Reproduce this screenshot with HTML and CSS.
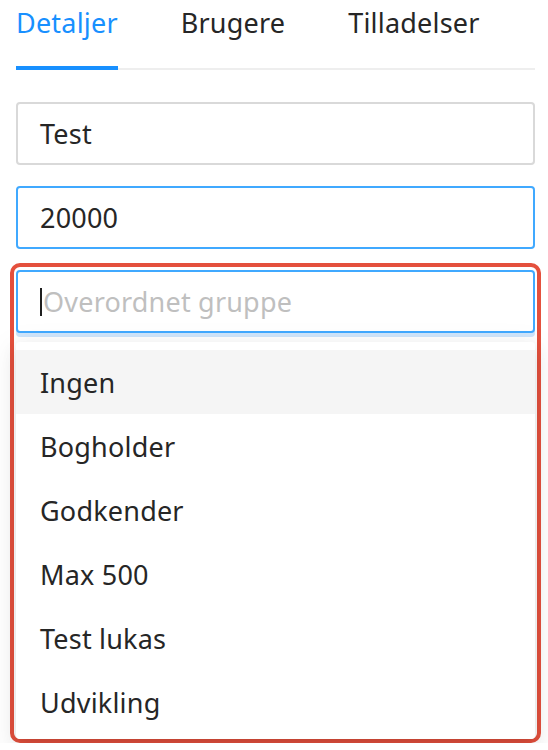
FILE: index.html
```html
<!DOCTYPE html>
<html lang="da">
<head>
<meta charset="utf-8">
<title>Gruppe</title>
<link rel="stylesheet" href="styles.css">
</head>
<body>
<div class="page">
  <nav class="tabs">
    <div class="tab active">Detaljer</div>
    <div class="tab">Brugere</div>
    <div class="tab">Tilladelser</div>
  </nav>
  <div class="form">
    <div class="field">Test</div>
    <div class="field focus">20000</div>
    <div class="highlight">
      <div class="field focus select"><span class="caret"></span><span class="placeholder">Overordnet gruppe</span></div>
      <ul class="menu">
        <li class="item hover">Ingen</li>
        <li class="item">Bogholder</li>
        <li class="item">Godkender</li>
        <li class="item">Max 500</li>
        <li class="item">Test lukas</li>
        <li class="item">Udvikling</li>
      </ul>
    </div>
  </div>
</div>
</body>
</html>
```
FILE: styles.css
```css
html, body {
  margin: 0;
  padding: 0;
  background: #ffffff;
}
body {
  font-family: "Noto Sans", "Lato", sans-serif;
  color: #262626;
  font-size: 27px;
  letter-spacing: 0.2px;
}
.page {
  padding: 0 13px 0 16px;
}
.tabs {
  display: flex;
  align-items: flex-start;
  height: 68px;
  border-bottom: 2px solid #eeeeee;
}
.tab {
  box-sizing: border-box;
  height: 70px;
  margin-bottom: -2px;
  padding-top: 7px;
  line-height: 32px;
  margin-right: 63px;
  color: #262626;
  border-bottom: 4px solid transparent;
}
.tab.active {
  color: #1890ff;
  border-bottom-color: #1890ff;
}
.form {
  display: flex;
  flex-direction: column;
  padding-top: 32px;
}
.field {
  box-sizing: border-box;
  height: 63px;
  display: flex;
  align-items: center;
  padding-left: 22px;
  border: 2px solid #d9d9d9;
  border-radius: 4px;
  background: #ffffff;
  margin-bottom: 21px;
}
.field.focus {
  border-color: #40a9ff;
}
.highlight {
  margin: -7px -6px 0 -6px;
  padding: 3px 2px 0 2px;
  border: 4px solid #e4503d;
  border-radius: 10px;
}
.select {
  margin-bottom: 0;
  box-shadow: 0 4px 0 0 #cfe5fb;
}
.caret {
  width: 2px;
  height: 28px;
  background: #1f1f1f;
  margin-right: 1px;
}
.placeholder {
  color: #bfbfbf;
}
.menu {
  list-style: none;
  margin: 9px 0 0 0;
  padding: 8px 0 5px 0;
  background: #ffffff;
  border-radius: 4px;
  box-shadow: 0 3px 6px -4px rgba(0,0,0,0.12), 0 6px 16px 0 rgba(0,0,0,0.08), 0 9px 28px 8px rgba(0,0,0,0.05);
}
.item {
  height: 64px;
  display: flex;
  align-items: center;
  padding-left: 24px;
}
.item.hover {
  background: #f5f5f5;
}
```
